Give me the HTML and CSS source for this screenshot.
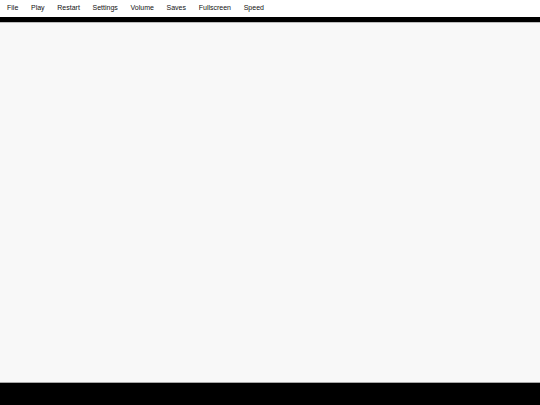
FILE: index.html
```html
<!DOCTYPE html>
<html lang="en">
<head>
<meta charset="utf-8">
<title>Player</title>
<link rel="stylesheet" href="styles.css">
</head>
<body>
<div class="app">
  <nav class="menubar">
    <span class="menu-item">File</span>
    <span class="menu-item">Play</span>
    <span class="menu-item">Restart</span>
    <span class="menu-item">Settings</span>
    <span class="menu-item">Volume</span>
    <span class="menu-item">Saves</span>
    <span class="menu-item">Fullscreen</span>
    <span class="menu-item">Speed</span>
  </nav>
  <div class="top-strip"></div>
  <main class="stage"></main>
  <div class="bottom-bar"></div>
</div>
</body>
</html>
```
FILE: styles.css
```css
html, body {
  margin: 0;
  padding: 0;
  width: 540px;
  height: 405px;
  overflow: hidden;
  background: #000;
}
.app {
  display: flex;
  flex-direction: column;
  width: 540px;
  height: 405px;
}
.menubar {
  display: flex;
  gap: 12.7px;
  height: 17px;
  padding-left: 7px;
  background: #fff;
  font-family: "Liberation Sans", Arial, sans-serif;
  font-size: 7px;
  line-height: 16px;
  color: #111;
  box-sizing: border-box;
}
.menu-item {
  white-space: nowrap;
}
.top-strip {
  height: 5px;
  background: #000;
  border-bottom: 1px solid #bdbdbd;
}
.stage {
  flex: 1;
  background: #f8f8f8;
  border-bottom: 1px solid #a8a8a8;
}
.bottom-bar {
  height: 22px;
  background: #000;
}
```
